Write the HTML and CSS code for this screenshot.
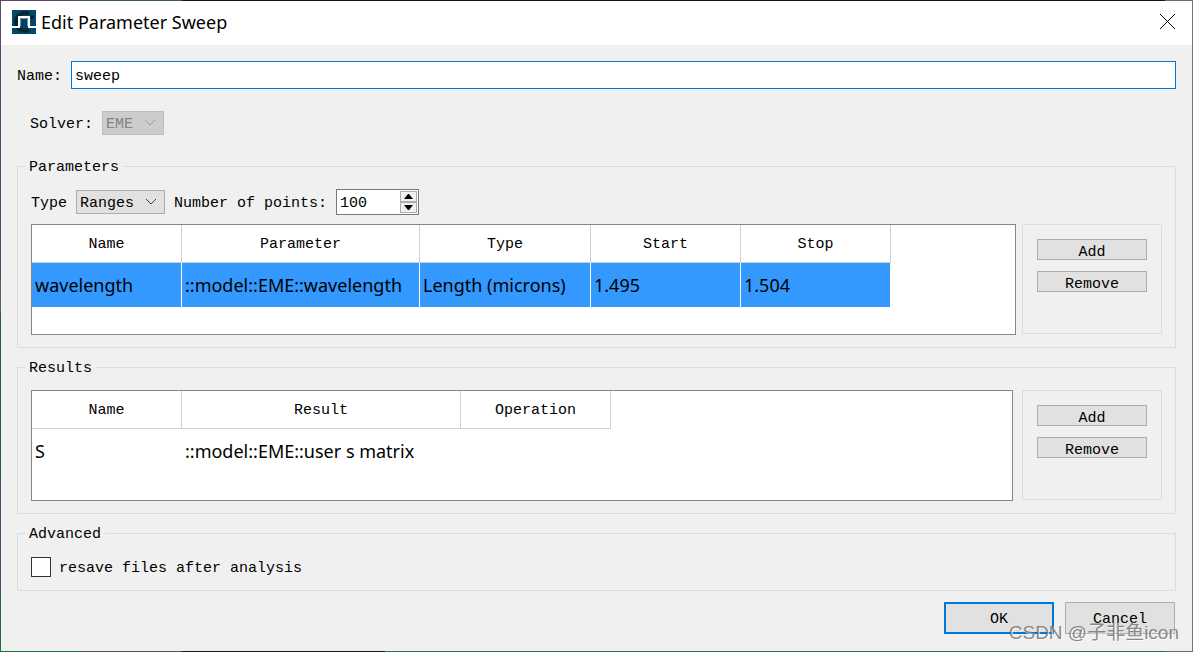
FILE: index.html
```html
<!DOCTYPE html>
<html lang="en">
<head>
<meta charset="utf-8">
<meta name="viewport" content="width=device-width, initial-scale=1">
<title>Edit Parameter Sweep</title>
<link rel="stylesheet" href="styles.css">
</head>
<body>
<div class="window">
  <header class="titlebar">
    <svg class="app-icon" viewBox="0 0 24 24" aria-hidden="true">
      <rect width="24" height="24" fill="#03486a"/>
      <path d="M17 4C10 1 4 6 4 12s5 10 13 8" fill="none" stroke="#062433" stroke-width="4"/>
      <circle cx="20" cy="7" r="2" fill="#062433"/>
      <rect x="8" y="8" width="8" height="10" fill="#04405e"/>
      <path d="M8.500 16V8.500h7V16" fill="none" stroke="#6f93a3" stroke-width="1"/>
      <path d="M0 17h7V7h10v10h7" fill="none" stroke="#fff" stroke-width="2"/>
    </svg>
    <h1 class="title">Edit Parameter Sweep</h1>
    <button class="close" type="button" aria-label="Close">
      <svg viewBox="0 0 16 16" aria-hidden="true"><path d="M0 0l15 15M15 0L0 15" stroke="#000" stroke-width="1" fill="none"/></svg>
    </button>
  </header>
  <form class="content">
    <div class="name-row">
      <label for="name">Name:</label>
      <input class="name-input" id="name" type="text" value="sweep">
    </div>
    <div class="solver-row">
      <label for="solver">Solver:</label>
      <span class="combo combo-disabled">
        <select id="solver" disabled><option>EME</option></select>
        <svg class="chevron" viewBox="0 0 12 8" aria-hidden="true"><path d="M1 1l5 5 5-5"/></svg>
      </span>
    </div>

    <fieldset class="group">
      <legend>Parameters</legend>
      <div class="options">
        <label for="type">Type</label>
        <span class="combo combo-type">
          <select id="type"><option>Ranges</option></select>
          <svg class="chevron" viewBox="0 0 12 8" aria-hidden="true"><path d="M1 1l5 5 5-5"/></svg>
        </span>
        <label for="points">Number of points:</label>
        <span class="spinner">
          <input id="points" type="number" value="100">
          <span class="steps">
            <button type="button" aria-label="Increase"><svg viewBox="0 0 9 5"><path d="M0 5L4 0h1l4 5z"/></svg></button>
            <button type="button" aria-label="Decrease"><svg viewBox="0 0 9 5"><path d="M0 0h9L5 5H4z"/></svg></button>
          </span>
        </span>
      </div>
      <div class="split">
        <div class="table-box">
          <table class="grid">
            <colgroup><col class="col-std"><col class="col-parameter"><col class="col-type"><col class="col-std"><col class="col-std"></colgroup>
            <thead><tr><th>Name</th><th>Parameter</th><th>Type</th><th>Start</th><th>Stop</th></tr></thead>
            <tbody><tr class="selected"><td>wavelength</td><td>::model::EME::wavelength</td><td>Length (microns)</td><td>1.495</td><td>1.504</td></tr></tbody>
          </table>
        </div>
        <div class="actions">
          <button class="small-button" type="button">Add</button>
          <button class="small-button" type="button">Remove</button>
        </div>
      </div>
    </fieldset>

    <fieldset class="group">
      <legend>Results</legend>
      <div class="split split-results">
        <div class="table-box">
          <table class="grid">
            <colgroup><col class="col-std"><col class="col-result"><col class="col-std"></colgroup>
            <thead><tr><th>Name</th><th>Result</th><th>Operation</th></tr></thead>
            <tbody><tr><td>S</td><td>::model::EME::user s matrix</td><td></td></tr></tbody>
          </table>
        </div>
        <div class="actions">
          <button class="small-button" type="button">Add</button>
          <button class="small-button" type="button">Remove</button>
        </div>
      </div>
    </fieldset>

    <fieldset class="group">
      <legend>Advanced</legend>
      <div class="check">
        <input id="resave" type="checkbox">
        <label for="resave">resave files after analysis</label>
      </div>
    </fieldset>

    <div class="footer">
      <button class="dialog-button default" type="button">OK</button>
      <button class="dialog-button" type="button">Cancel</button>
    </div>
  </form>
  <span class="watermark">CSDN @子非鱼icon</span>
</div>
</body>
</html>
```
FILE: styles.css
```css
* { box-sizing: border-box; }

body {
  margin: 0;
  min-height: 100vh;
  display: flex;
  padding: 1px;
  font: 15px/20px "Liberation Mono", "Noto Sans CJK SC", monospace;
  color: #000;
  background:
    linear-gradient(90deg, #56496b 80px, #3c5a66 80px 182px, #17171b 182px 1165px, #6b6b6b 1165px) top / 100% 1px no-repeat,
    linear-gradient(90deg, #1f7040 80px, #3c5a66 80px 182px, #17171b 182px 385px, #2c6e48 385px 1165px, #6b6b6b 1165px) bottom / 100% 1px no-repeat,
    linear-gradient(#56496b 280px, #5f5f5f 280px 313px, #215a5c 313px 478px, #56496b 478px 592px, #1f7040 592px) left / 1px 100% no-repeat,
    #777;
}

button, input, select { font: inherit; color: inherit; margin: 0; border-radius: 0; }
label { padding-top: 3px; }

.window {
  flex: 1;
  position: relative;
  background: #f0f0f0;
}

.titlebar {
  display: flex;
  align-items: center;
  gap: 5px;
  height: 44px;
  padding: 0 16px 2px 11px;
  background: #fff;
}
.app-icon { width: 24px; height: 24px; }
.title {
  flex: 1;
  margin: 0;
  font: 400 18px/24px "Noto Sans", sans-serif;
}
.close {
  display: flex;
  padding: 0;
  border: 0;
  background: none;
}
.close svg { width: 16px; height: 16px; }

.content { padding: 16px; }

.name-row, .solver-row, .options { display: flex; align-items: center; }
.name-row { gap: 9px; }
.name-input {
  flex: 1;
  min-width: 0;
  height: 28px;
  padding: 2px 3px 0;
  border: 1px solid #0078d7;
  background: #fff;
  outline: 0;
}
.solver-row { gap: 9px; margin: 22px 0 21px; padding-left: 13px; }

.combo { display: grid; align-items: center; height: 24px; }
.combo select, .combo .chevron { grid-area: 1 / 1; }
.combo select {
  appearance: none;
  width: 100%;
  height: 24px;
  padding: 3px 3px 0;
  border: 1px solid #adadad;
  background: #e1e1e1;
}
.chevron {
  width: 12px;
  height: 8px;
  margin-right: 8px;
  justify-self: end;
  fill: none;
  stroke: #444;
  pointer-events: none;
}
.combo-disabled { width: 62px; }
.combo-disabled select { background: #ccc; border-color: #bfbfbf; color: #838383; opacity: 1; }
.combo-disabled .chevron { stroke: #a0a0a0; }
.combo-type { width: 89px; }

.group {
  min-width: 0;
  margin: 0 0 9px;
  padding: 13px 13px 12px;
  border: 1px solid #dcdcdc;
}
.group legend {
  height: 20px;
  margin-left: -6px;
  padding: 0 4px;
  line-height: 24px;
}

.options { gap: 9px; margin-bottom: 9px; }
.spinner {
  display: flex;
  width: 83px;
  height: 26px;
  padding: 1px;
  border: 1px solid #7a7a7a;
  background: #fff;
}
.spinner input {
  appearance: textfield;
  flex: 1;
  min-width: 0;
  padding: 3px 2px 0;
  border: 0;
  background: none;
  outline: 0;
}
.spinner input::-webkit-inner-spin-button { appearance: none; }
.steps { display: grid; width: 17px; }
.steps button {
  display: flex;
  align-items: center;
  justify-content: center;
  padding: 0;
  border: 1px solid #adadad;
  background: #f0f0f0;
}
.steps svg { width: 9px; height: 5px; }

.split { display: flex; gap: 6px; }
.split-results { gap: 9px; }
.table-box {
  flex: 1;
  min-width: 0;
  min-height: 111px;
  border: 1px solid #828790;
  background: #fff;
  overflow: hidden;
}
.grid { table-layout: fixed; width: 0; border-collapse: separate; border-spacing: 0; }
.col-std { width: 150px; }
.col-parameter { width: 238px; }
.col-type { width: 171px; }
.col-result { width: 279px; }
.grid th {
  height: 38px;
  padding: 3px 2px 0;
  border: solid #d0d0d0;
  border-width: 0 1px 1px 0;
  font-weight: 400;
}
.grid td {
  height: 44px;
  padding: 0 3px;
  font: 18px/24px "Noto Sans", sans-serif;
  white-space: nowrap;
}
.selected td { background: #3399ff; border-right: 1px solid #fff; }

.actions {
  display: flex;
  flex-direction: column;
  gap: 11px;
  width: 140px;
  margin-bottom: 1px;
  padding: 14px;
  border: 1px solid #dcdcdc;
}
.small-button, .dialog-button {
  border: 1px solid #adadad;
  background: #e1e1e1;
  padding: 3px 0 0;
}
.small-button { height: 21px; }

.check { display: flex; align-items: center; gap: 8px; height: 22px; }
.check input {
  appearance: none;
  width: 20px;
  height: 20px;
  border: 1px solid #333;
  background: #fff;
}

.footer { display: flex; justify-content: flex-end; gap: 11px; padding: 2px 1px 0 0; }
.dialog-button { width: 110px; height: 32px; }
.default { border: 2px solid #0078d7; }

.watermark {
  position: absolute;
  right: 13px;
  bottom: 6px;
  font: 19px/24px "Liberation Sans", "Noto Sans CJK SC", sans-serif;
  color: rgba(110, 110, 110, 0.8);
  text-shadow: 1px 1px 0 rgba(255, 255, 255, 0.7);
  pointer-events: none;
}
```
